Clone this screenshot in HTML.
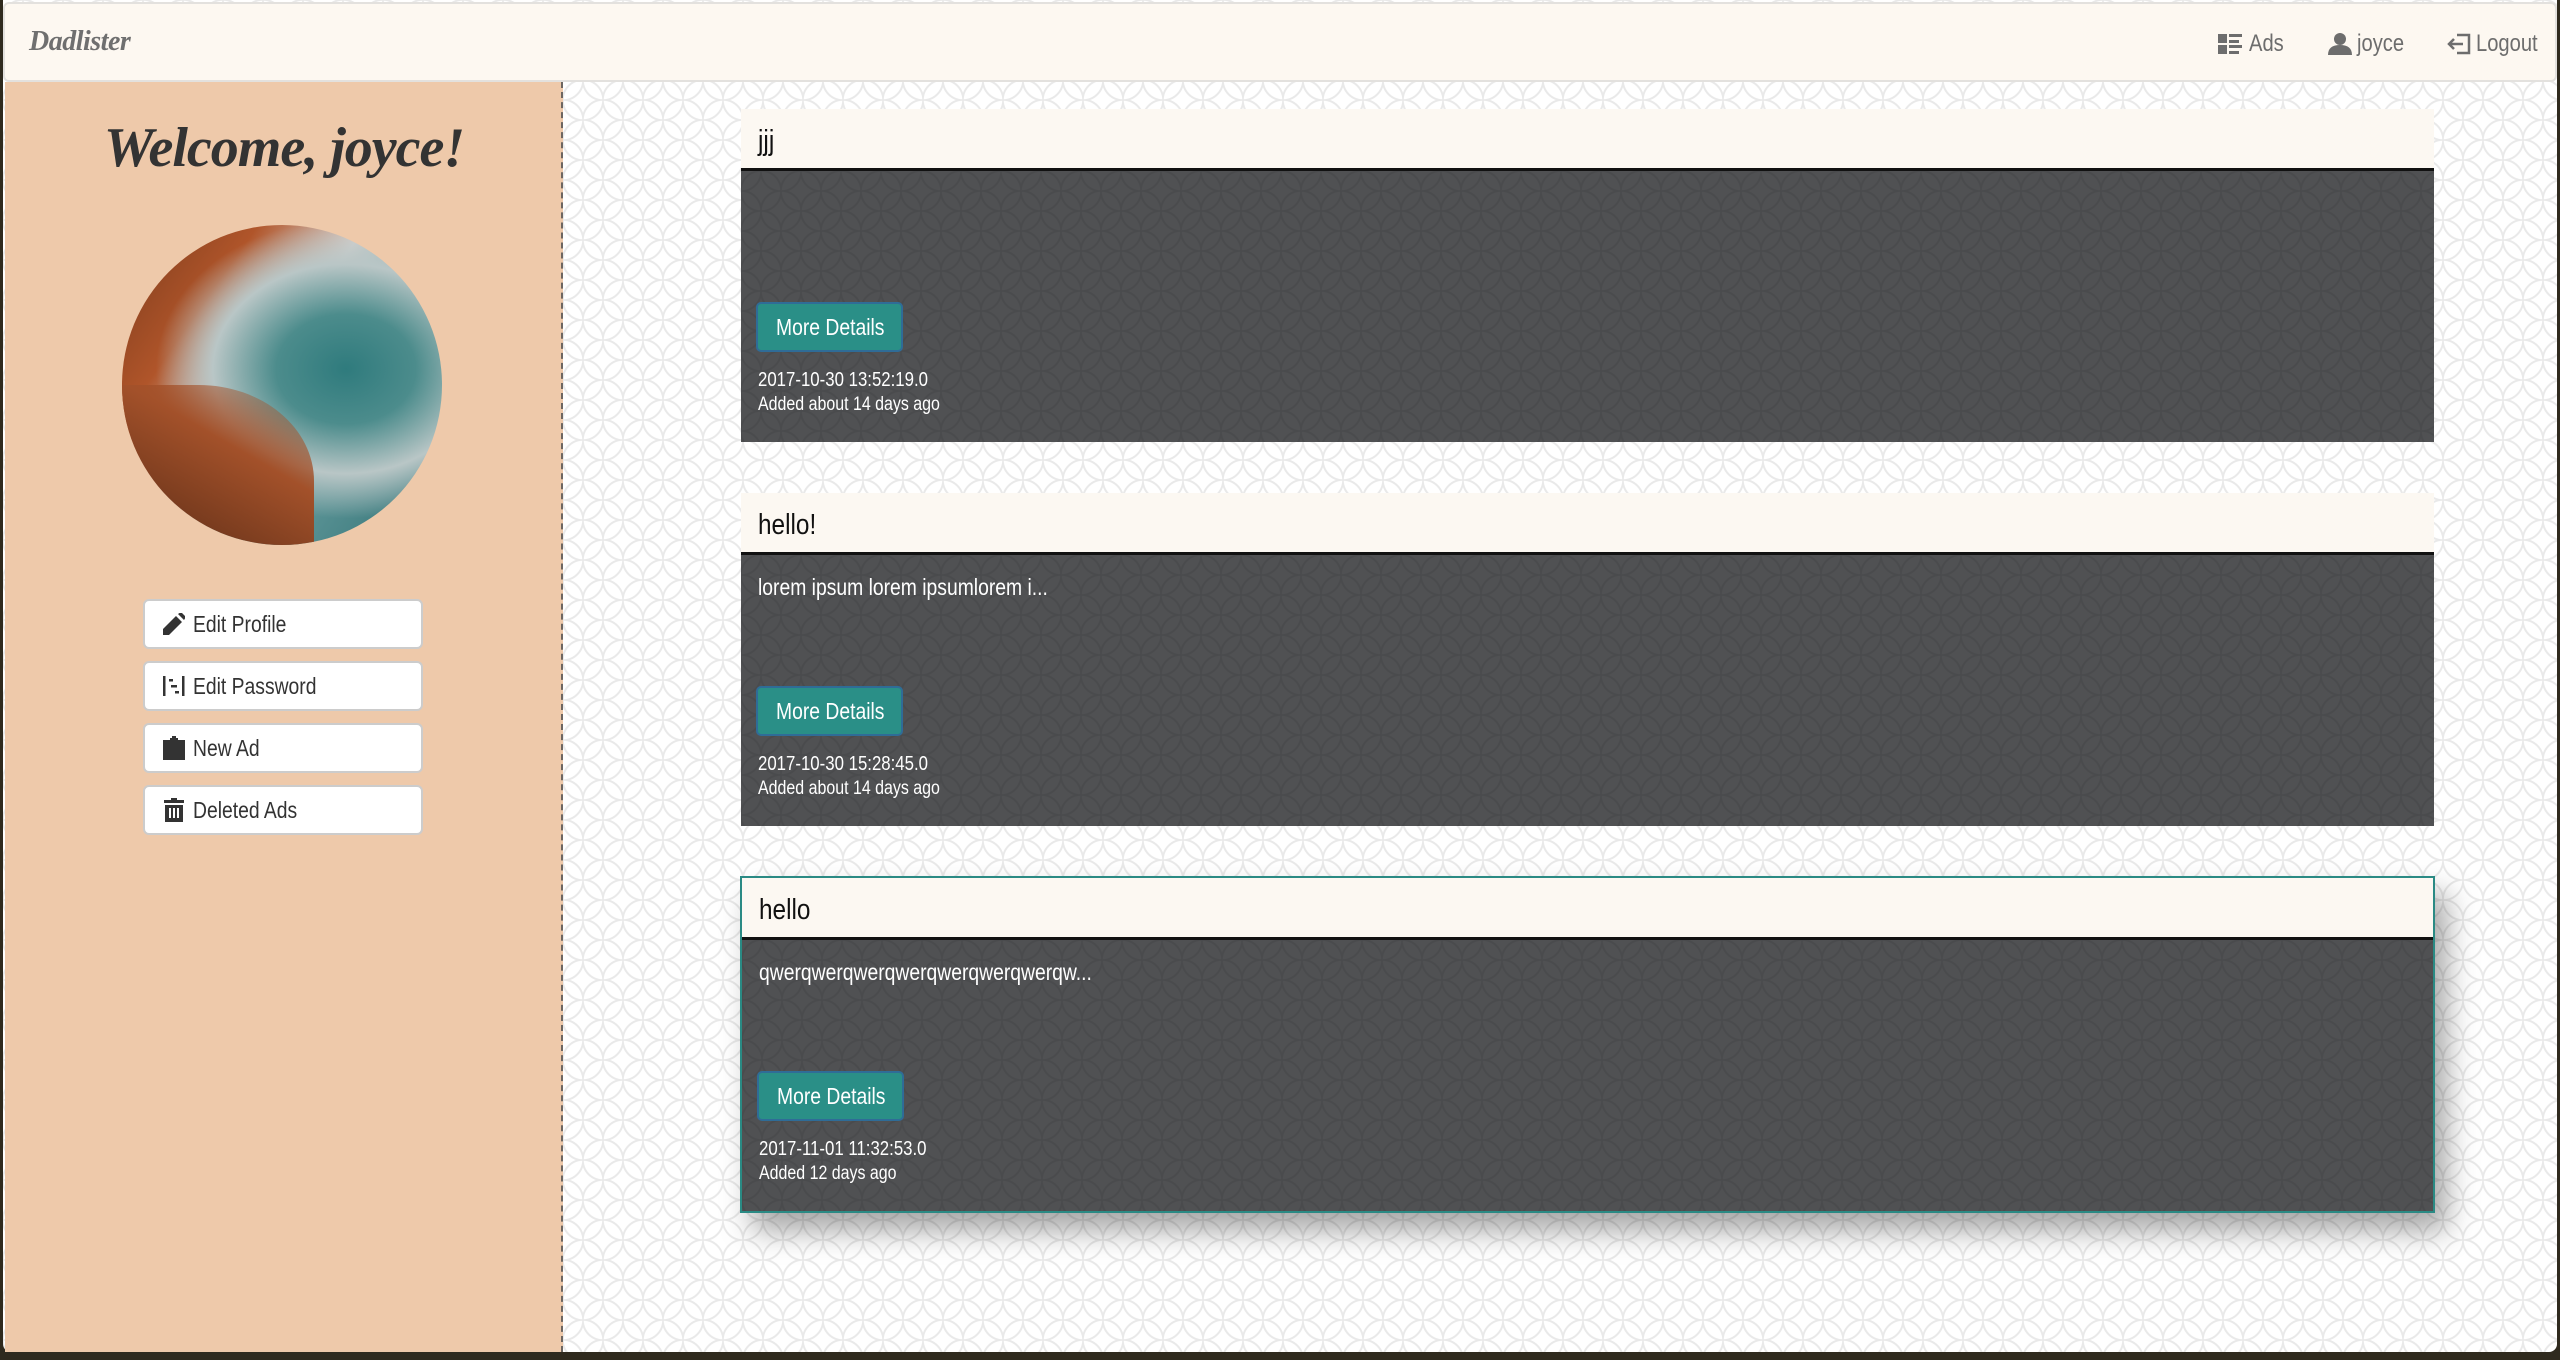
<!DOCTYPE html>
<html><head><meta charset="utf-8"><style>
*{box-sizing:border-box;margin:0;padding:0}
html,body{width:2560px;height:1360px;overflow:hidden}
body{background:#2f2a1e;font-family:"Liberation Sans",sans-serif;position:relative}
.n{display:inline-block;transform:scaleX(.84);transform-origin:left center;white-space:nowrap}
.page{position:absolute;left:3px;top:0;width:2554px;height:1352px;background-color:#fff;
background-image:radial-gradient(circle,transparent 19px,#e9e9e9 19.5px,#e9e9e9 21px,transparent 21.5px),radial-gradient(circle,transparent 19px,#e9e9e9 19.5px,#e9e9e9 21px,transparent 21.5px);
background-size:40px 40px;background-position:0 0,20px 20px;border-radius:0 0 8px 8px}
.nav{position:absolute;left:3px;top:2px;width:2554px;height:80px;background:#fdf8f1;border:2px solid #e3e1de;border-radius:6px}
.brand{position:absolute;left:24px;top:22px;font-family:"Liberation Serif",serif;font-style:italic;font-weight:bold;font-size:28px;color:#6f6f6f;letter-spacing:-0.5px}
.ni{position:absolute;top:26px;font-size:24px;color:#6d6d6d;display:flex;align-items:center;gap:5px}
.side{position:absolute;left:5px;top:82px;width:558px;height:1270px;background:#eec9aa;border-right:2px dashed #6d6661}
.welcome{position:absolute;left:0;width:558px;top:34px;text-align:center;font-family:"Liberation Serif",serif;font-style:italic;font-weight:bold;font-size:56px;color:#333;letter-spacing:-1px}
.avatar{position:absolute;left:117px;top:143px;width:320px;height:320px;border-radius:50%;
background:radial-gradient(ellipse at 70% 45%,#2f7b7d 0%,#4c8c8c 22%,#b9c6c6 42%,transparent 60%),
linear-gradient(125deg,#7a3a1c 0%,#b0552a 25%,#d9d2cf 45%,#6aa0a2 60%,#2f6f72 100%),#5a4030;overflow:hidden}
.avatar:after{content:"";position:absolute;left:0;bottom:0;width:60%;height:50%;background:linear-gradient(30deg,#5b2c16,#a3512a 60%,transparent);border-radius:0 60% 0 0}
.sb{position:absolute;left:143px;width:280px;height:50px;background:#fff;border:2px solid #ccc;border-radius:6px;font-size:23px;color:#333;display:flex;align-items:center;padding-left:18px;gap:8px}
.card{position:absolute;left:741px;width:1693px;height:333px}
.ch{height:62px;background:#fcf8f2;border-bottom:3px solid #111;font-size:29px;color:#111;padding:18px 0 0 17px;line-height:28px}
.cb{height:271px;background-color:#505153;position:relative;color:#fff;
background-image:radial-gradient(circle,transparent 19px,#4a4b4d 19.5px,#4a4b4d 21px,transparent 21.5px),radial-gradient(circle,transparent 19px,#4a4b4d 19.5px,#4a4b4d 21px,transparent 21.5px);background-size:40px 40px;background-position:0 0,20px 20px}
.txt{position:absolute;left:17px;top:19px;font-size:23px}
.btn{position:absolute;left:15px;top:131px;width:147px;height:50px;background:#2a8f87;border:2px solid #2f6c97;border-radius:5px;color:#fff;font-size:23px;line-height:46px;padding-left:18px}
.d1{position:absolute;left:17px;top:198px;font-size:20px}
.d2{position:absolute;left:17px;top:223px;font-size:19px}
.c3{border:2px solid #2a8a84;box-shadow:12px 18px 28px rgba(0,0,0,.35);left:740px;width:1695px}
</style></head><body>
<div class="page"></div>
<div class="nav">
<div class="brand">Dadlister</div>
<div class="ni" style="left:2213px"><svg width="26" height="22" viewBox="0 0 26 22"><rect x="0" y="1" width="9" height="9" fill="#6d6d6d"/><rect x="0" y="12" width="9" height="9" fill="#6d6d6d"/><rect x="11" y="1" width="13" height="3" fill="#6d6d6d"/><rect x="11" y="7" width="10" height="3" fill="#6d6d6d"/><rect x="11" y="12" width="13" height="3" fill="#6d6d6d"/><rect x="11" y="18" width="10" height="3" fill="#6d6d6d"/></svg><span class="n">Ads</span></div>
<div class="ni" style="left:2323px"><svg width="24" height="22" viewBox="0 0 24 22"><circle cx="12" cy="6" r="6" fill="#6d6d6d"/><path d="M0 22 Q0 12 12 12 Q24 12 24 22Z" fill="#6d6d6d"/></svg><span class="n">joyce</span></div>
<div class="ni" style="left:2442px"><svg width="24" height="22" viewBox="0 0 24 22"><path d="M10 2H22V20H10" fill="none" stroke="#6d6d6d" stroke-width="2.5"/><path d="M16 11H2M7 6L2 11L7 16" fill="none" stroke="#6d6d6d" stroke-width="2.5"/></svg><span class="n">Logout</span></div>
</div>
<div class="side">
<div class="welcome">Welcome, joyce!</div>
<div class="avatar"></div>
</div>
<div class="sb" style="top:599px"><svg width="22" height="22" viewBox="0 0 22 22"><path d="M0 22V16L13 3L19 9L6 22Z M15 1L18 -1L23 4L21 7Z" fill="#333"/></svg><span class="n">Edit Profile</span></div>
<div class="sb" style="top:661px"><svg width="22" height="22" viewBox="0 0 22 22"><rect x="0" y="1" width="2.5" height="20" fill="#333"/><rect x="19" y="1" width="2.5" height="20" fill="#333"/><rect x="6" y="4" width="4" height="2.5" fill="#333"/><rect x="8" y="10" width="6" height="2.5" fill="#333"/><rect x="12" y="16" width="4" height="2.5" fill="#333"/></svg><span class="n">Edit Password</span></div>
<div class="sb" style="top:723px"><svg width="22" height="24" viewBox="0 0 22 24"><path d="M0 4H7V2H9V0H13V2H15V4H22V24H0Z" fill="#333"/></svg><span class="n">New Ad</span></div>
<div class="sb" style="top:785px"><svg width="22" height="24" viewBox="0 0 22 24"><path d="M8 0H14V2H21V5H1V2H8Z M2 7H20V24H2Z" fill="#333"/><rect x="6" y="10" width="2" height="10" fill="#fff"/><rect x="10" y="10" width="2" height="10" fill="#fff"/><rect x="14" y="10" width="2" height="10" fill="#fff"/></svg><span class="n">Deleted Ads</span></div>

<div class="card" style="top:109px"><div class="ch"><span class="n">jjj</span></div><div class="cb"><div class="btn"><span class="n">More Details</span></div><div class="d1"><span class="n">2017-10-30 13:52:19.0</span></div><div class="d2"><span class="n">Added about 14 days ago</span></div></div></div>
<div class="card" style="top:493px"><div class="ch"><span class="n">hello!</span></div><div class="cb"><div class="txt"><span class="n">lorem ipsum lorem ipsumlorem i...</span></div><div class="btn"><span class="n">More Details</span></div><div class="d1"><span class="n">2017-10-30 15:28:45.0</span></div><div class="d2"><span class="n">Added about 14 days ago</span></div></div></div>
<div class="card c3" style="top:876px;height:337px"><div class="ch"><span class="n">hello</span></div><div class="cb"><div class="txt"><span class="n">qwerqwerqwerqwerqwerqwerqwerqw...</span></div><div class="btn"><span class="n">More Details</span></div><div class="d1"><span class="n">2017-11-01 11:32:53.0</span></div><div class="d2"><span class="n">Added 12 days ago</span></div></div></div>
</body></html>
